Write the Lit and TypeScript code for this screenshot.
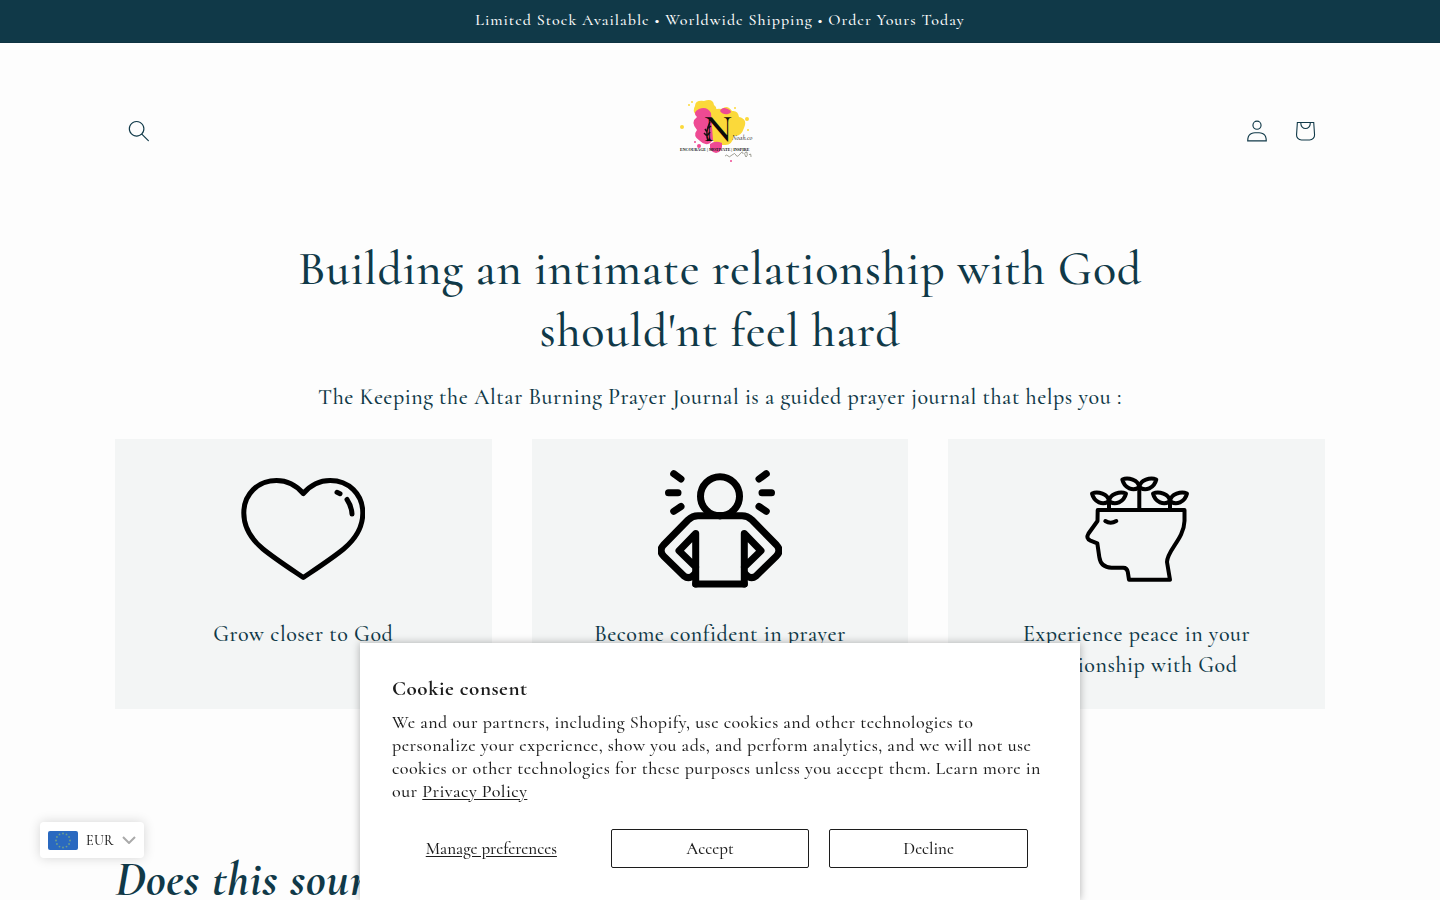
import { LitElement, html, css, svg } from "lit";
import { customElement } from "lit/decorators.js";

const sprout = (x: number, y: number) => svg`
  <g transform="translate(${x} ${y})">
    <path d="M0 0C-1-7-11-10-17-7.500C-15 1-6 5 0 0Z" />
    <path d="M0 0C1-7 11-10 17-7.500C15 1 6 5 0 0Z" />
    <path d="M0 0V${43 - y}" />
  </g>`;

const heart = html`<svg class="art" viewBox="0 0 124 124" aria-hidden="true">
  <g fill="none" stroke="#000" stroke-width="5" stroke-linecap="round" stroke-linejoin="round">
    <path d="M62.300 26.500C55 18 46 13.500 35.500 13.500C17 13.500 2.800 27 2.800 46C2.800 61 10 72 22 82C33 91 46 99.500 62.300 110.500C78.600 99.500 91.600 91 102.600 82C114.600 72 121.800 61 121.800 46C121.800 27 107.600 13.500 89.100 13.500C78.600 13.500 69.600 18 62.300 26.500Z" />
    <path d="M96 25.300L99 26.700M106 32.500Q110.500 39 111 47" />
  </g>
</svg>`;

const arm = svg`
  <path d="M62 48.700H40Q34.500 48.700 30 53L5.500 78Q0.500 83.500 5.500 89L26 109Q31 113 36 107.500" />
  <path d="M37.700 117V66.500L21 83.700L37.700 100" />
  <path d="M15.700 6.700L23 12M10.500 25.700H20M15.700 44.300L23 39.500" />`;

const confident = html`<svg class="art" viewBox="0 0 124 124" aria-hidden="true">
  <g fill="none" stroke="#000" stroke-width="7" stroke-linecap="round" stroke-linejoin="round">
    <circle cx="62" cy="29.300" r="19.500" />
    ${arm}
    <g transform="translate(124 0) scale(-1 1)">${arm}</g>
    <path d="M37.700 117H86.300" />
  </g>
</svg>`;

const peace = html`<svg class="art" viewBox="0.500 0 124 124" aria-hidden="true">
  <g fill="none" stroke="#000" stroke-width="4" stroke-linecap="round" stroke-linejoin="round">
    <path d="M23.200 43H110V54C109.500 72 92.800 83 92.500 95L95.500 112.800H54.500L53.300 105Q52.500 100.700 48.800 100.700H37C28 100.500 25.500 95 24.800 90L22.800 76.300L16 73.700Q11 71.500 14 66.500L23 54Z" />
    <path d="M30.800 54Q36 57.500 41.800 54" />
    ${sprout(34.5, 34)} ${sprout(64.8, 20)} ${sprout(95.5, 34)}
  </g>
</svg>`;

const logo = html`<svg class="logo" viewBox="0 0 100 90" role="img" aria-label="Noah.co">
  <g fill="#fbd93a">
    <path d="M25 20Q25 14 34 15Q43 12 44 19Q50 23 42 30Q32 34 26 29Q22 25 25 20Z" />
    <path d="M39 32Q41 21 52 23Q57 18 62 25Q68 24 69 31Q78 33 74 42Q71 51 64 50Q62 60 54 59Q43 60 41 50Z" />
    <circle cx="77" cy="33" r="2" /><circle cx="12" cy="41" r="2" /><circle cx="19" cy="19" r="1" />
    <circle cx="65" cy="22" r="1" /><circle cx="22" cy="16" r="1" /><circle cx="78" cy="44" r="1" />
  </g>
  <g fill="#ee4a93">
    <path d="M27 31Q22 26 29 23Q37 20 41 27L43 54Q37 62 30 55Q22 50 27 44Q20 36 27 31Z" />
    <path d="M50 25Q52 20 58 23Q64 26 58 28Q53 29 50 25Z" />
    <path d="M40 58Q45 54 52 57Q53 66 46 67Q39 66 40 58Z" />
    <circle cx="29" cy="60" r="2" /><circle cx="61" cy="75" r="1" /><circle cx="25" cy="56" r="1" />
  </g>
  <path d="M38 55Q35 46 40 36M37 50L34 47M37 46L35 43M37 50L40 46M37 43L41 40" fill="none" stroke="#1a1212" stroke-width="1.500" />
  <text class="logo-mark" x="34" y="55">N</text>
  <text class="logo-script" x="62" y="54">Noah.co</text>
  <text class="logo-line" x="10" y="65">ENCOURAGE | MOTIVATE | INSPIRE</text>
  <path d="M55 70q2-2 3 0t4-1t4 0t4-1t3 0M76 71q-3-5 1-5q1 4-1 5M79 69q2-3 2 2" fill="none" stroke="#443" stroke-width=".5" />
</svg>`;

@customElement("app-root")
export class AppRoot extends LitElement {
  static styles = css`
    :host {
      display: block;
      height: 100vh;
      overflow: hidden;
      background: #fdfdfd;
      color: #103948;
      font-family: "Cormorant", "Cormorant Garamond", "Liberation Serif", serif;
      font-weight: 500;
    }
    * { box-sizing: border-box; }
    h1, h2, h3, p { margin: 0; font-weight: 500; }
    button { font-family: inherit; font-weight: inherit; color: inherit; background: none; border: 0; padding: 0; cursor: pointer; }

    .announcement {
      background: #103948;
      color: #fdfdfd;
      padding: 9px 16px 11px;
      border-bottom: 1px solid #0e3442;
      text-align: center;
      font-size: 16px;
      line-height: 22px;
      letter-spacing: 1px;
    }
    .wrap { max-width: 1310px; margin: 0 auto; padding: 0 50px; }
    .header {
      display: grid;
      grid-template-columns: 1fr auto 1fr;
      align-items: center;
      padding-top: 43px;
      padding-bottom: 43px;
    }
    .icons { display: flex; justify-content: flex-end; margin-right: -4px; }
    .icon-button {
      display: flex;
      align-items: center;
      justify-content: center;
      width: 48px;
      height: 48px;
      color: inherit;
    }
    .icon { width: 22px; height: 22px; fill: currentColor; }
    .icon-cart { width: 44px; height: 44px; fill: currentColor; }
    .logo { display: block; width: 100px; height: 90px; }
    .logo-mark { font-size: 38px; font-weight: 600; fill: #0c0a0a; }
    .logo-script { font-size: 7px; font-style: italic; fill: #222; }
    .logo-line { font-family: "Liberation Serif", serif; font-size: 4px; font-weight: 700; fill: #111; }

    .intro { text-align: center; padding-top: 19px; }
    .title { max-width: 900px; margin: 0 auto; font-size: 48px; line-height: 62px; letter-spacing: 0.015em; }
    .lead { margin-top: 19px; font-size: 22px; line-height: 32px; letter-spacing: 0.025em; }
    .cards {
      list-style: none;
      margin: 26px 0 0;
      padding: 0;
      display: grid;
      grid-template-columns: repeat(3, 1fr);
      gap: 40px;
    }
    .card {
      display: flex;
      flex-direction: column;
      align-items: center;
      gap: 28px;
      padding: 28px;
      background: #f3f5f5;
    }
    .art { width: 124px; height: 124px; }
    .card-title { max-width: 260px; font-size: 22px; line-height: 31px; letter-spacing: 0.025em; }
    .next { margin-top: 139px; font-size: 48px; line-height: 62px; letter-spacing: 0.015em; font-weight: 700; font-style: italic; }

    .currency {
      position: fixed;
      left: 40px;
      bottom: 42px;
      display: flex;
      align-items: center;
      gap: 8px;
      height: 36px;
      padding: 0 8px;
      background: #fff;
      border-radius: 4px;
      box-shadow: 0 0 12px rgba(0, 0, 0, 0.16);
      color: #222;
      font-size: 14px;
      letter-spacing: 0.025em;
    }
    .flag { width: 30px; height: 19px; }
    .chevron { width: 14px; height: 8px; }

    .consent {
      position: fixed;
      bottom: 0;
      left: 0;
      right: 0;
      margin: 0 auto;
      width: 100%;
      max-width: 720px;
      padding: 32px;
      background: #fff;
      box-shadow: 0 0 8px rgba(0, 0, 0, 0.3);
      color: #1c1c1c;
    }
    .consent-title { font-size: 21px; line-height: 28px; font-weight: 700; letter-spacing: 0.025em; }
    .consent-text { margin-top: 8px; font-size: 18px; line-height: 23px; letter-spacing: 0.025em; }
    .policy { color: inherit; text-underline-offset: 2px; }
    .actions {
      display: grid;
      grid-template-columns: repeat(3, 1fr);
      gap: 20px;
      margin-top: 26px;
      padding-right: 20px;
    }
    .action { height: 39px; font-size: 17px; }
    .manage { text-decoration: underline; text-underline-offset: 2px; }
    .outlined { border: 1px solid #1c1c1c; border-radius: 2px; }
  `;

  private cards = [
    { art: heart, title: "Grow closer to God" },
    { art: confident, title: "Become confident in prayer" },
    { art: peace, title: "Experience peace in your relationship with God" },
  ];

  private stars = Array.from({ length: 12 }, (_, i) => {
    const a = (i * Math.PI) / 6;
    return svg`<circle cx=${15 + 7 * Math.sin(a)} cy=${9.5 - 7 * Math.cos(a)} r="0.9" />`;
  });

  render() {
    return html`
      <div class="announcement">Limited Stock Available • Worldwide Shipping • Order Yours Today</div>
      <header class="header wrap">
        <button class="icon-button" aria-label="Search">
          <svg class="icon" viewBox="0 0 18 19"><path fill-rule="evenodd" d="M11.03 11.68A5.784 5.784 0 112.85 3.5a5.784 5.784 0 018.18 8.18zm.26 1.12a6.78 6.78 0 11.72-.7l5.4 5.4a.5.5 0 11-.71.7l-5.41-5.4z" /></svg>
        </button>
        <a href="#" aria-label="Home">${logo}</a>
        <div class="icons">
          <a class="icon-button" href="#" aria-label="Log in">
            <svg class="icon" viewBox="0 0 18 19"><path fill-rule="evenodd" d="M6 4.5a3 3 0 116 0 3 3 0 01-6 0zm3-4a4 4 0 100 8 4 4 0 000-8zm5.58 12.15c1.12.82 1.83 2.24 1.91 4.85H1.51c.08-2.6.79-4.03 1.9-4.85C4.66 11.75 6.5 11.5 9 11.5s4.35.26 5.58 1.15zM9 10.5c-2.5 0-4.65.24-6.17 1.35C1.27 12.98.5 14.93.5 18v.5h17V18c0-3.07-.77-5.02-2.33-6.15-1.52-1.1-3.67-1.35-6.17-1.35z" /></svg>
          </a>
          <a class="icon-button" href="#" aria-label="Cart">
            <svg class="icon-cart" viewBox="0 0 40 40"><path fill-rule="evenodd" d="M15.75 11.8h-3.16l-.77 11.6a5 5 0 004.99 5.34h7.38a5 5 0 004.99-5.33L28.4 11.8zm0 1h-2.22l-.71 10.67a4 4 0 003.99 4.27h7.38a4 4 0 004-4.27l-.72-10.67h-2.22v.63a4.75 4.75 0 11-9.5 0zm8.5 0h-7.5v.63a3.75 3.75 0 107.5 0z" /></svg>
          </a>
        </div>
      </header>
      <main class="wrap">
        <section class="intro">
          <h1 class="title">Building an intimate relationship with God should'nt feel hard</h1>
          <p class="lead">The Keeping the Altar Burning Prayer Journal is a guided prayer journal that helps you :</p>
          <ul class="cards">
            ${this.cards.map((c) => html`<li class="card">${c.art}<h3 class="card-title">${c.title}</h3></li>`)}
          </ul>
        </section>
        <h2 class="next">Does this sound like you?</h2>
      </main>
      <button class="currency" aria-label="Currency EUR">
        <svg class="flag" viewBox="0 0 30 19"><rect width="30" height="19" rx="2" fill="#2a69c0" /><g fill="#6fa08a">${this.stars}</g></svg>
        <span>EUR</span>
        <svg class="chevron" viewBox="0 0 14 8"><path d="M1 1L7 7L13 1" fill="none" stroke="#aaa" stroke-width="2" /></svg>
      </button>
      <section class="consent" role="dialog" aria-labelledby="consent-title">
        <h2 class="consent-title" id="consent-title">Cookie consent</h2>
        <p class="consent-text">
          We and our partners, including Shopify, use cookies and other technologies to personalize your experience, show
          you ads, and perform analytics, and we will not use cookies or other technologies for these purposes unless you
          accept them. Learn more in our <a class="policy" href="#">Privacy Policy</a>
        </p>
        <div class="actions">
          <button class="action manage">Manage preferences</button>
          <button class="action outlined">Accept</button>
          <button class="action outlined">Decline</button>
        </div>
      </section>
    `;
  }
}
